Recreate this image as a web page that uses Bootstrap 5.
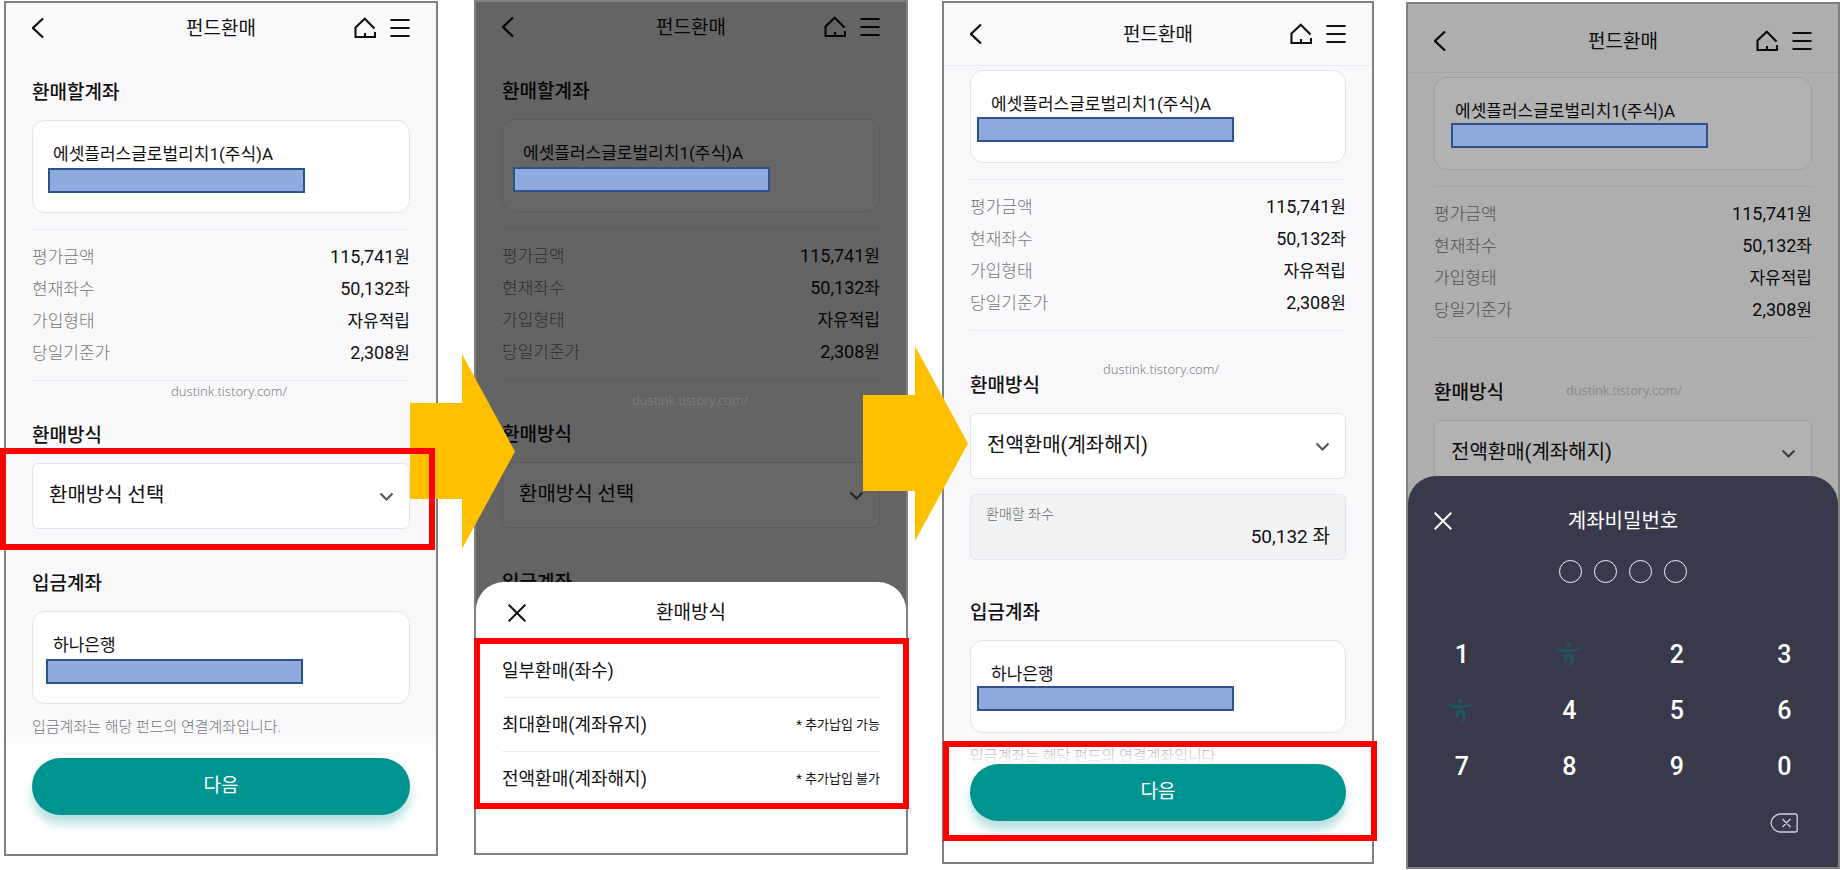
<!DOCTYPE html>
<html lang="ko">
<head>
<meta charset="utf-8">
<meta name="viewport" content="width=device-width, initial-scale=1">
<title>펀드환매</title>
<link href="https://cdn.jsdelivr.net/npm/bootstrap@5.3.0/dist/css/bootstrap.min.css" rel="stylesheet">
<style>
  :root { --teal: #009490; --line: #e4e4ea; --navy: #383a4c; }
  body { font-family: Roboto, "Noto Sans CJK KR", sans-serif; color: #111; background: #fff; }
  svg { display: block; fill: none; stroke: currentColor; }

  /* four screens with an arrow or a blank gutter between them */
  .flow-board { display: grid; grid-template-columns: 434fr 36px 434fr 34px 432fr 32px 434fr; align-items: start; padding-left: 4px; }
  .phone { border: 2px solid #808080; background: #f9f9fb; margin-top: 1px; }
  .step-2 { margin-top: 0; }
  .step-4 { margin-top: 2px; }
  .flow-arrow { position: absolute; z-index: 2; width: 105px; height: 195px; fill: #ffc000; stroke: none; }
  .flow-arrow.first { left: -28px; top: 354px; }
  .flow-arrow.second { left: -45px; top: 346px; }

  .app-bar { display: grid; grid-template-columns: 1fr auto 1fr; align-items: center; height: 50px; padding: 0 26px; }
  .app-bar.scrolled { height: 63px; border-bottom: 1px solid #ececf0; }
  .step-4 .app-bar { height: 69px; padding-top: 6px; }
  .bar-title { font-size: 19px; line-height: 28px; font-weight: 400; margin: 0; }
  h1.bar-title { padding-top: 2px; }
  .bar-tools { gap: 14px; }
  .icon-btn { border: 0; background: none; padding: 0; color: inherit; }

  .screen-body { padding: 26px 26px 0; }
  .scrolled + .screen-body { padding-top: 4px; }
  .sec-title { font-size: 19px; line-height: 28px; font-weight: 500; margin: 0 0 13px; }
  .sec-gap { margin-top: 41px; }
  .step-3 .readonly-box + .sec-gap { margin-top: 39px; }

  .account-box { height: 93px; padding-top: 21px; border: 1px solid var(--line); border-radius: 13px; background: #fff; }
  .account-box p { font-size: 17px; line-height: 24px; margin: 0 0 0 20px; white-space: nowrap; }
  .mask { position: relative; z-index: 1; width: 257px; height: 25px; margin: 2px 0 0 15px; border: 2px solid #2f528f; background: #8faadc; }
  .mask.bank { margin-left: 13px; }
  .step-2 .mask { margin-left: 10px; }
  .step-3 .mask { margin: 1px 0 0 6px; }
  .step-3 .mask.bank { margin-top: 0; }
  .step-4 .mask { margin: 0 0 0 16px; }

  .facts { margin: 16px 0 0; padding: 11px 0; border: solid #e8e8ed; border-width: 1px 0; font-size: 17px; line-height: 32px; }
  .facts dt { font-weight: 300; color: #777; }
  .facts dd { margin: 0; }
  .facts dd b { font-size: 18px; font-weight: 400; }
  .watermark { position: absolute; z-index: 1; font-family: "Noto Sans", sans-serif; font-weight: 300; font-size: 13px; line-height: 20px; color: #808080; left: 139px; top: 152px; }
  .step-2 .watermark { left: 130px; top: 178px; }
  .step-3 .watermark { left: 133px; top: 180px; }
  .step-4 .watermark { left: 132px; top: 210px; }

  .method-select { height: 66px; padding: 0 44px 2px 16px; border: 1px solid var(--line); border-radius: 6px; font-size: 20px; color: #111; background-color: #fff; background-position: right 15px center; background-size: 15px 15px;
    background-image: url("data:image/svg+xml,%3csvg xmlns='http://www.w3.org/2000/svg' viewBox='0 0 15 15'%3e%3cpath fill='none' stroke='%23555' stroke-width='2' d='M1.5 4.5l6 6 6-6'/%3e%3c/svg%3e"); }
  .readonly-box { height: 66px; margin-top: 15px; padding: 9px 15px; border: 1px solid var(--line); border-radius: 6px; background: #f2f3f5; }
  .readonly-box label { display: block; font-size: 14px; line-height: 20px; font-weight: 300; color: #666; }
  .readonly-box input { display: block; width: 100%; height: 26px; padding: 0; border: 0; background: none; text-align: right; font-size: 19px; color: #111; }

  .note { font-size: 15px; line-height: 24px; font-weight: 300; color: #777; margin: 11px 0 0; }
  .cta-area { position: relative; margin-top: -7px; padding: 26px 26px 39px; background: linear-gradient(to bottom, rgba(255,255,255,0), #fff 28px); }
  .step-3 .cta-area { margin-top: -30px; padding-bottom: 41px; }
  .cta { height: 57px; border: 0; font-size: 19px; color: #fff; background: var(--teal); box-shadow: 0 9px 10px rgba(0,148,144,.28); }

  .mark-box { position: absolute; z-index: 3; border: 6px solid #f00; pointer-events: none; }
  .around-select { inset: -15px -25px -21px -32px; }
  .around-list { inset: -6px -3px -4px -2px; }
  .around-cta { inset: 3px -5px 21px -1px; }

  .scrim { position: absolute; inset: 0; background: rgba(0,0,0,.6); }
  .step-4 .scrim { background: rgba(0,0,0,.3); }
  .step-2 .screen-body { padding-bottom: 13px; }
  .step-2 .sec-title.last { margin-bottom: 0; }
  .step-4 .screen-body { padding-bottom: 18px; }
  .sheet { position: relative; margin-top: -28px; border-radius: 28px 28px 0 0; background: #fff; padding-bottom: 48px; }
  .sheet-head { display: grid; grid-template-columns: 1fr auto 1fr; align-items: center; height: 62px; padding: 0 32px; }
  .option-list { padding: 0 26px; }
  .option { display: flex; justify-content: space-between; align-items: center; width: 100%; height: 54px; padding: 0; border: 0; border-bottom: 1px solid #ececf2; background: none; font-size: 18px; color: #111; }
  .option:last-of-type { height: 53px; border-bottom: 0; }
  .option span { font-size: 13px; }

  .pin-sheet { background: var(--navy); color: #fff; padding-bottom: 16px; }
  .pin-sheet .sheet-head { height: 84px; padding: 5px 26px 0; }
  .pin-sheet .bar-title { font-size: 20px; }
  .pin-dots { gap: 12px; margin-bottom: 44px; }
  .pin-dots span { width: 23px; height: 23px; border: 1px solid #f2f2f5; border-radius: 50%; }
  .keypad { display: grid; grid-template-columns: repeat(4, 1fr); grid-auto-rows: 56px; }
  .keypad > * { display: flex; align-items: center; justify-content: center; }
  .keypad button { border: 0; padding: 0; background: none; color: #fff; font-size: 25px; font-weight: 500; }
  .keypad .brand { fill: #20565d; stroke: none; }
  .keypad .erase { grid-column: 4; color: #d0d1d8; }
</style>
</head>
<body>
<svg class="d-none" aria-hidden="true">
  <symbol id="i-back" viewBox="0 0 14 22"><path d="M11 1.500 1 11l10 9.500" stroke-width="2.300"/></symbol>
  <symbol id="i-home" viewBox="0 0 22 22"><path d="M20.500 11.500 10.800 1.700 1.500 10.500V20h19.500v-5M11 16v3.500" stroke-width="2.100"/></symbol>
  <symbol id="i-menu" viewBox="0 0 20 20"><path d="M.5 2h19M.5 10h19M.5 18h19" stroke-width="2.100"/></symbol>
  <symbol id="i-close" viewBox="0 0 18 18"><path d="m.7.7 16.600 16.600M17.300.7.7 17.300" stroke-width="2"/></symbol>
  <symbol id="i-brand" viewBox="0 0 27 24"><circle cx="12.700" cy="2.300" r="2.200"/><path d="M0 5C4 4.500 9 7 14 6.500 19 6.200 24 5 27 3.300 25 6.500 20 8 15 8.700 10 9.400 3 10 .5 6.500ZM10 19.500C7.300 17.500 7 14 9 12 11.500 9.800 16.700 10 17.600 13.500 18.300 17 16.500 21 14.500 24.300L13 23.500C14.500 20.500 15 17.500 14.200 15.300 13.300 13.700 11.500 13.800 11 15.300 10.500 17 11.500 18.500 10 19.500Z"/></symbol>
  <symbol id="i-erase" viewBox="0 0 28 20"><path d="M10 1h15q2.200 0 2.200 2v14q0 2-2.200 2H10C6 19 1 14.500 1 10s5-9 9-9ZM12.500 6l8 8M20.500 6l-8 8" stroke-width="1.300"/></symbol>
</svg>

<main class="flow-board">
  <!-- step 1: choose the method -->
  <section class="phone step-1">
    <header class="app-bar">
      <button class="icon-btn text-start" aria-label="뒤로"><svg width="14" height="22"><use href="#i-back"/></svg></button>
      <h1 class="bar-title">펀드환매</h1>
      <div class="bar-tools d-flex justify-content-end align-items-center">
        <button class="icon-btn" aria-label="홈"><svg width="22" height="22"><use href="#i-home"/></svg></button>
        <button class="icon-btn" aria-label="메뉴"><svg width="20" height="20"><use href="#i-menu"/></svg></button>
      </div>
    </header>
    <div class="screen-body">
      <h2 class="sec-title">환매할계좌</h2>
      <div class="account-box"><p>에셋플러스글로벌리치1(주식)A</p><div class="mask"></div></div>
      <div class="position-relative">
        <dl class="facts">
          <div class="d-flex justify-content-between"><dt>평가금액</dt><dd><b>115,741</b>원</dd></div>
          <div class="d-flex justify-content-between"><dt>현재좌수</dt><dd><b>50,132</b>좌</dd></div>
          <div class="d-flex justify-content-between"><dt>가입형태</dt><dd>자유적립</dd></div>
          <div class="d-flex justify-content-between"><dt>당일기준가</dt><dd><b>2,308</b>원</dd></div>
        </dl>
        <span class="watermark">dustink.tistory.com/</span>
      </div>
      <h2 class="sec-title sec-gap"><label for="method1">환매방식</label></h2>
      <div class="position-relative">
        <select class="form-select method-select" id="method1"><option>환매방식 선택</option></select>
        <div class="mark-box around-select"></div>
      </div>
      <h2 class="sec-title sec-gap">입금계좌</h2>
      <div class="account-box"><p>하나은행</p><div class="mask bank"></div></div>
      <p class="note">입금계좌는 해당 펀드의 연결계좌입니다.</p>
    </div>
    <div class="cta-area"><button class="btn rounded-pill w-100 cta">다음</button></div>
  </section>

  <div class="position-relative"><svg class="flow-arrow first" viewBox="0 0 105 195"><path d="M0 49h52V0l53 97.500L52 195v-50H0Z"/></svg></div>

  <!-- step 2: method list -->
  <section class="phone step-2">
    <div class="position-relative">
      <header class="app-bar">
        <button class="icon-btn text-start" aria-label="뒤로"><svg width="14" height="22"><use href="#i-back"/></svg></button>
        <h1 class="bar-title">펀드환매</h1>
        <div class="bar-tools d-flex justify-content-end align-items-center">
          <button class="icon-btn" aria-label="홈"><svg width="22" height="22"><use href="#i-home"/></svg></button>
          <button class="icon-btn" aria-label="메뉴"><svg width="20" height="20"><use href="#i-menu"/></svg></button>
        </div>
      </header>
      <div class="screen-body">
        <h2 class="sec-title">환매할계좌</h2>
        <div class="account-box"><p>에셋플러스글로벌리치1(주식)A</p><div class="mask"></div></div>
        <div class="position-relative z-1">
          <span class="watermark">dustink.tistory.com/</span>
        </div>
        <dl class="facts">
          <div class="d-flex justify-content-between"><dt>평가금액</dt><dd><b>115,741</b>원</dd></div>
          <div class="d-flex justify-content-between"><dt>현재좌수</dt><dd><b>50,132</b>좌</dd></div>
          <div class="d-flex justify-content-between"><dt>가입형태</dt><dd>자유적립</dd></div>
          <div class="d-flex justify-content-between"><dt>당일기준가</dt><dd><b>2,308</b>원</dd></div>
        </dl>
        <h2 class="sec-title sec-gap"><label for="method2">환매방식</label></h2>
        <select class="form-select method-select" id="method2"><option>환매방식 선택</option></select>
        <h2 class="sec-title sec-gap last">입금계좌</h2>
      </div>
      <div class="scrim"></div>
    </div>
    <div class="sheet">
      <div class="sheet-head">
        <button class="icon-btn text-start" aria-label="닫기"><svg width="18" height="18"><use href="#i-close"/></svg></button>
        <h2 class="bar-title">환매방식</h2>
      </div>
      <div class="position-relative">
        <div class="option-list">
          <button class="option">일부환매(좌수)</button>
          <button class="option">최대환매(계좌유지)<span>* 추가납입 가능</span></button>
          <button class="option">전액환매(계좌해지)<span>* 추가납입 불가</span></button>
        </div>
        <div class="mark-box around-list"></div>
      </div>
    </div>
  </section>

  <div class="position-relative"><svg class="flow-arrow second" viewBox="0 0 105 195"><path d="M0 49h52V0l53 97.500L52 195v-50H0Z"/></svg></div>

  <!-- step 3: confirm -->
  <section class="phone step-3">
    <header class="app-bar scrolled">
      <button class="icon-btn text-start" aria-label="뒤로"><svg width="14" height="22"><use href="#i-back"/></svg></button>
      <h1 class="bar-title">펀드환매</h1>
      <div class="bar-tools d-flex justify-content-end align-items-center">
        <button class="icon-btn" aria-label="홈"><svg width="22" height="22"><use href="#i-home"/></svg></button>
        <button class="icon-btn" aria-label="메뉴"><svg width="20" height="20"><use href="#i-menu"/></svg></button>
      </div>
    </header>
    <div class="screen-body">
      <div class="account-box"><p>에셋플러스글로벌리치1(주식)A</p><div class="mask"></div></div>
      <div class="position-relative">
        <dl class="facts">
          <div class="d-flex justify-content-between"><dt>평가금액</dt><dd><b>115,741</b>원</dd></div>
          <div class="d-flex justify-content-between"><dt>현재좌수</dt><dd><b>50,132</b>좌</dd></div>
          <div class="d-flex justify-content-between"><dt>가입형태</dt><dd>자유적립</dd></div>
          <div class="d-flex justify-content-between"><dt>당일기준가</dt><dd><b>2,308</b>원</dd></div>
        </dl>
        <span class="watermark">dustink.tistory.com/</span>
      </div>
      <h2 class="sec-title sec-gap"><label for="method3">환매방식</label></h2>
      <select class="form-select method-select" id="method3"><option>전액환매(계좌해지)</option></select>
      <div class="readonly-box">
        <label for="units">환매할 좌수</label>
        <input id="units" type="text" value="50,132 좌" readonly>
      </div>
      <h2 class="sec-title sec-gap">입금계좌</h2>
      <div class="account-box"><p>하나은행</p><div class="mask bank"></div></div>
      <p class="note">입금계좌는 해당 펀드의 연결계좌입니다.</p>
    </div>
    <div class="cta-area">
      <button class="btn rounded-pill w-100 cta">다음</button>
      <div class="mark-box around-cta"></div>
    </div>
  </section>

  <div></div>

  <!-- step 4: account password -->
  <section class="phone step-4">
    <div class="position-relative">
      <header class="app-bar scrolled">
        <button class="icon-btn text-start" aria-label="뒤로"><svg width="14" height="22"><use href="#i-back"/></svg></button>
        <h1 class="bar-title">펀드환매</h1>
        <div class="bar-tools d-flex justify-content-end align-items-center">
          <button class="icon-btn" aria-label="홈"><svg width="22" height="22"><use href="#i-home"/></svg></button>
          <button class="icon-btn" aria-label="메뉴"><svg width="20" height="20"><use href="#i-menu"/></svg></button>
        </div>
      </header>
      <div class="screen-body">
        <div class="account-box"><p>에셋플러스글로벌리치1(주식)A</p><div class="mask"></div></div>
        <div class="position-relative z-1">
          <span class="watermark">dustink.tistory.com/</span>
        </div>
        <dl class="facts">
          <div class="d-flex justify-content-between"><dt>평가금액</dt><dd><b>115,741</b>원</dd></div>
          <div class="d-flex justify-content-between"><dt>현재좌수</dt><dd><b>50,132</b>좌</dd></div>
          <div class="d-flex justify-content-between"><dt>가입형태</dt><dd>자유적립</dd></div>
          <div class="d-flex justify-content-between"><dt>당일기준가</dt><dd><b>2,308</b>원</dd></div>
        </dl>
        <h2 class="sec-title sec-gap"><label for="method4">환매방식</label></h2>
        <select class="form-select method-select" id="method4"><option>전액환매(계좌해지)</option></select>
      </div>
      <div class="scrim"></div>
    </div>
    <div class="sheet pin-sheet">
      <div class="sheet-head">
        <button class="icon-btn text-start" aria-label="닫기"><svg width="18" height="18"><use href="#i-close"/></svg></button>
        <h2 class="bar-title">계좌비밀번호</h2>
      </div>
      <div class="pin-dots d-flex justify-content-center"><span></span><span></span><span></span><span></span></div>
      <div class="keypad">
        <button>1</button>
        <div><svg class="brand" width="27" height="24"><use href="#i-brand"/></svg></div>
        <button>2</button>
        <button>3</button>
        <div><svg class="brand" width="27" height="24"><use href="#i-brand"/></svg></div>
        <button>4</button>
        <button>5</button>
        <button>6</button>
        <button>7</button>
        <button>8</button>
        <button>9</button>
        <button>0</button>
        <button class="erase" aria-label="지우기"><svg width="28" height="20"><use href="#i-erase"/></svg></button>
      </div>
    </div>
  </section>
</main>
<script src="https://cdn.jsdelivr.net/npm/bootstrap@5.3.0/dist/js/bootstrap.bundle.min.js"></script>
</body>
</html>
